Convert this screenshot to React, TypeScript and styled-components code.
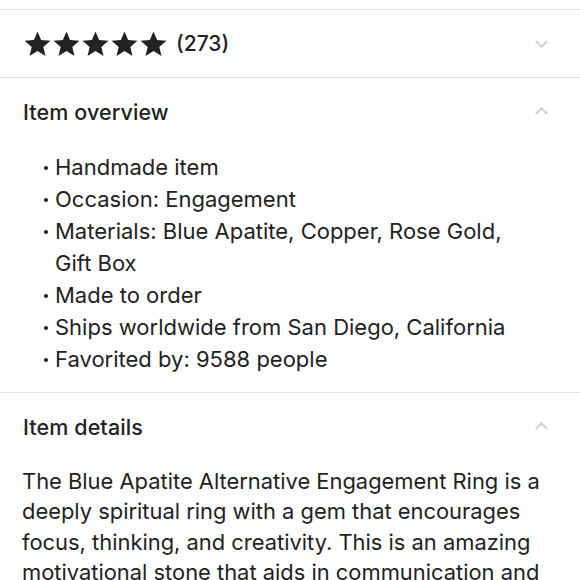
import React from "react";
import styled, { createGlobalStyle } from "styled-components";

const Global = createGlobalStyle`
  html, body { margin: 0; padding: 0; background: #fff; }
  body { font-family: "Inter", "Noto Sans", sans-serif; color: #222; }
`;

const Page = styled.div`
  padding-top: 9px;
`;

const Section = styled.section`
  border-top: 1px solid #e1e1e1;
`;

const Header = styled.div`
  height: 67px;
  display: flex;
  align-items: center;
  justify-content: space-between;
  padding: 0 31px 0 23px;
`;

const Title = styled.h2`
  margin: 0;
  font-size: 21.5px;
  font-weight: 500;
  letter-spacing: 0.1px;
  color: #222;
`;

const Stars = styled.div`
  display: flex;
  align-items: center;
  gap: 8px;
`;

const StarRow = styled.div`
  display: flex;
  gap: 0px;
`;

const Count = styled.span`
  font-size: 21px;
  font-weight: 500;
  color: #222;
`;

const Chevron = styled.svg`
  width: 15px;
  height: 15px;
  color: #d2d2d2;
`;

const List = styled.ul`
  margin: 0;
  padding: 6px 40px 17px 22px;
  list-style: none;
`;

const Item = styled.li`
  position: relative;
  padding-left: 33px;
  font-size: 22px;
  line-height: 32px;
  color: #222;
  &::before {
    content: "";
    position: absolute;
    left: 21.5px;
    top: 15px;
    width: 4px;
    height: 4px;
    border-radius: 50%;
    background: #222;
  }
`;

const Paragraph = styled.p`
  margin: 0;
  padding: 6px 22px 0 22px;
  font-size: 21.9px;
  line-height: 30.3px;
  color: #222;
`;

const Star = () => (
  <svg width="29" height="28" viewBox="0 0 24 24">
    <path
      fill="#222"
      d="M12 1.2l3.1 7.4 8 .65-6.1 5.25 1.85 7.8L12 18.1l-6.85 4.2 1.85-7.8-6.1-5.25 8-.65z"
    />
  </svg>
);

const Down = () => (
  <Chevron viewBox="0 0 16 16">
    <path d="M2 5.5l6 6 6-6" fill="none" stroke="currentColor" strokeWidth="2.4" />
  </Chevron>
);

const Up = () => (
  <Chevron viewBox="0 0 16 16">
    <path d="M2 10.5l6-6 6 6" fill="none" stroke="currentColor" strokeWidth="2.4" />
  </Chevron>
);

const items = [
  "Handmade item",
  "Occasion: Engagement",
  "Materials: Blue Apatite, Copper, Rose Gold, Gift Box",
  "Made to order",
  "Ships worldwide from San Diego, California",
  "Favorited by: 9588 people",
];

export default function App() {
  return (
    <Page>
      <Global />
      <Section>
        <Header>
          <Stars>
            <StarRow>
              {[0, 1, 2, 3, 4].map((i) => (
                <Star key={i} />
              ))}
            </StarRow>
            <Count>(273)</Count>
          </Stars>
          <Down />
        </Header>
      </Section>
      <Section>
        <Header>
          <Title>Item overview</Title>
          <Up />
        </Header>
        <List>
          {items.map((t) => (
            <Item key={t}>{t}</Item>
          ))}
        </List>
      </Section>
      <Section>
        <Header>
          <Title>Item details</Title>
          <Up />
        </Header>
        <Paragraph>
          The Blue Apatite Alternative Engagement Ring is a deeply spiritual ring with a gem that
          encourages focus, thinking, and creativity. This is an amazing motivational stone that
          aids in communication and clarity.
        </Paragraph>
      </Section>
    </Page>
  );
}
